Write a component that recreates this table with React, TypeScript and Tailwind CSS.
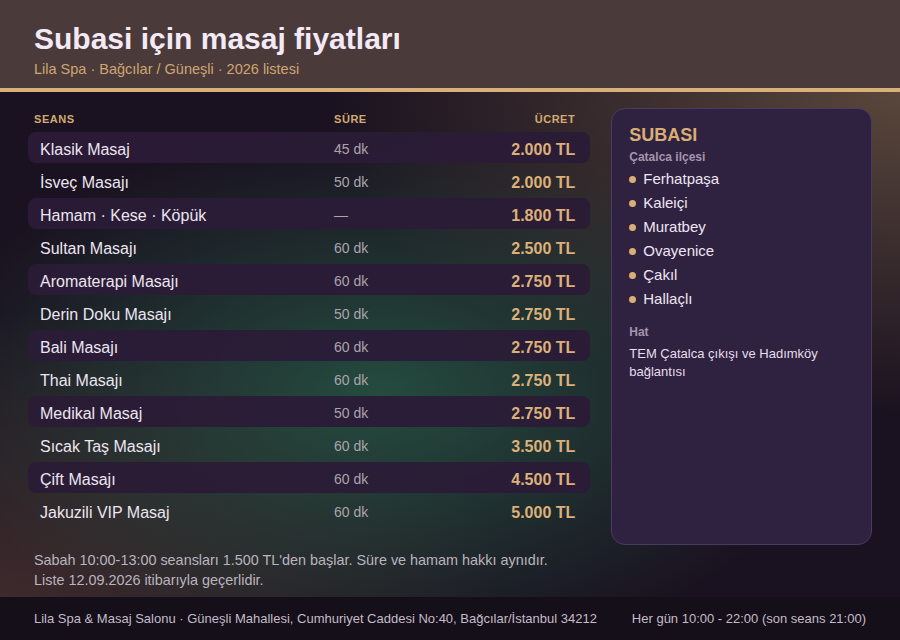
import React from "react";

const treatments = [
  { name: "Klasik Masaj", time: "45 dk", price: "2.000 TL" },
  { name: "İsveç Masajı", time: "50 dk", price: "2.000 TL" },
  { name: "Hamam · Kese · Köpük", time: "—", price: "1.800 TL" },
  { name: "Sultan Masajı", time: "60 dk", price: "2.500 TL" },
  { name: "Aromaterapi Masajı", time: "60 dk", price: "2.750 TL" },
  { name: "Derin Doku Masajı", time: "50 dk", price: "2.750 TL" },
  { name: "Bali Masajı", time: "60 dk", price: "2.750 TL" },
  { name: "Thai Masajı", time: "60 dk", price: "2.750 TL" },
  { name: "Medikal Masaj", time: "50 dk", price: "2.750 TL" },
  { name: "Sıcak Taş Masajı", time: "60 dk", price: "3.500 TL" },
  { name: "Çift Masajı", time: "60 dk", price: "4.500 TL" },
  { name: "Jakuzili VIP Masaj", time: "60 dk", price: "5.000 TL" },
];

const districts = ["Ferhatpaşa", "Kaleiçi", "Muratbey", "Ovayenice", "Çakıl", "Hallaçlı"];

export default function App() {
  return (
    <div className="w-[900px] h-[640px] flex flex-col overflow-hidden bg-[#1a1220] font-['Liberation_Sans',Arial,sans-serif]">
      <header className="h-[92px] shrink-0 bg-[#4a3a39] border-b-4 border-[#d8b07a] px-[34px] pt-[22px]">
        <h1 className="text-[30px] leading-[34px] font-bold text-[#f4e9f6]">Subasi için masaj fiyatları</h1>
        <p className="mt-[3px] text-[14.5px] leading-[20px] text-[#cfa672]">Lila Spa · Bağcılar / Güneşli · 2026 listesi</p>
      </header>

      <main className="flex-1 flex flex-col px-[28px] pt-[16px] bg-[radial-gradient(ellipse_at_42%_60%,rgba(40,98,74,0.72),transparent_62%),radial-gradient(ellipse_at_100%_0%,rgba(96,76,62,0.9),transparent_45%),radial-gradient(ellipse_at_0%_100%,rgba(84,58,52,0.6),transparent_40%)]">
        <div className="flex gap-[21px] h-[437px]">
          <div className="w-[563px]">
            <div className="h-[20px] mb-[4px] pt-[2px] flex items-center pl-[6px] pr-[15px] text-[11px] tracking-[0.05em] font-bold text-[#d2aa70]">
              <span className="w-[300px]">SEANS</span>
              <span className="flex-1">SÜRE</span>
              <span>ÜCRET</span>
            </div>
            {treatments.map((t, i) => (
              <div
                key={t.name}
                className={`h-[31px] mb-[2px] pt-[4px] flex items-center pl-[12px] pr-[15px] rounded-[8px] ${
                  i % 2 === 0 ? "bg-[#2b1b37]/95" : ""
                }`}
              >
                <span className="w-[294px] text-[16px] text-[#ece5f0]">{t.name}</span>
                <span className="flex-1 text-[14px] text-[#aaa4ad]">{t.time}</span>
                <span className="text-[16px] font-bold text-[#dcb079]">{t.price}</span>
              </div>
            ))}
          </div>

          <aside className="w-[261px] rounded-[14px] border border-[#4b3a62] bg-[#2f2140] px-[17px] pt-[15px]">
            <h2 className="text-[18px] leading-[22px] font-bold text-[#d9ae74]">SUBASI</h2>
            <p className="mt-[3px] text-[12px] leading-[16px] font-bold text-[#a596ad]">Çatalca ilçesi</p>
            <ul className="mt-[2px]">
              {districts.map((d) => (
                <li key={d} className="h-[24px] flex items-center gap-[7px] text-[15px] text-[#eee6f2]">
                  <span className="w-[7px] h-[7px] rounded-full bg-[#d9ae74]" />
                  {d}
                </li>
              ))}
            </ul>
            <p className="mt-[13px] text-[12px] leading-[16px] font-bold text-[#a596ad]">Hat</p>
            <p className="mt-[5px] text-[13px] leading-[18px] text-[#e6deea]">TEM Çatalca çıkışı ve Hadımköy bağlantısı</p>
          </aside>
        </div>

        <div className="mt-[5px] pl-[6px] text-[14.4px] leading-[20px] text-[#bab4be]">
          <p>Sabah 10:00-13:00 seansları 1.500 TL'den başlar. Süre ve hamam hakkı aynıdır.</p>
          <p>Liste 12.09.2026 itibarıyla geçerlidir.</p>
        </div>
      </main>

      <footer className="h-[43px] shrink-0 bg-[#150f1a] px-[34px] flex items-center justify-between text-[13px] text-[#c4bcc8]">
        <span>Lila Spa &amp; Masaj Salonu · Güneşli Mahallesi, Cumhuriyet Caddesi No:40, Bağcılar/İstanbul 34212</span>
        <span>Her gün 10:00 - 22:00 (son seans 21:00)</span>
      </footer>
    </div>
  );
}
